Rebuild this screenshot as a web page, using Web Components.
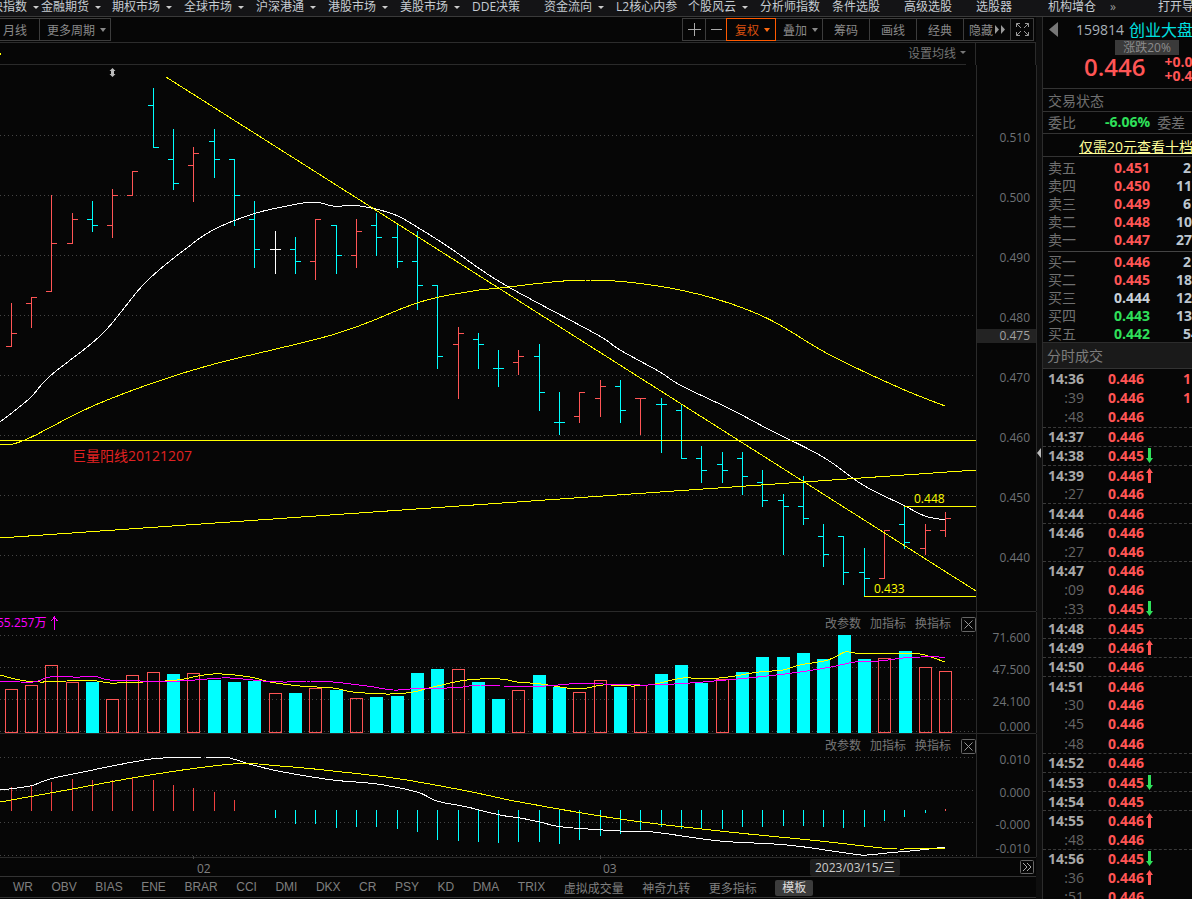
<!DOCTYPE html>
<html lang="zh">
<head>
<meta charset="utf-8">
<title>K线</title>
<style>
  html, body { margin: 0; height: 899px; overflow: hidden; background: #060606; }
  body { font: 12px "Open Sans", "Noto Sans CJK SC", sans-serif; color: #999; }
</style>
</head>
<body>
<kline-app></kline-app>

<script>
(function () {
  const CN = '"Open Sans", "Noto Sans CJK SC", sans-serif';
  const RED = '#ff5555';
  const CYAN = '#00ffff';
  const YELLOW = '#ffff00';
  const MAGENTA = '#ff00ff';
  const COLORS = { c: CYAN, r: RED, w: '#ffffff' };

  // x, high, low, open, close, colour (screen pixels read off the picture)
  const BARS = [
    [11, 303, 346, 346, 333, 'r'], [31, 297, 327, 303, 297, 'r'], [51, 195, 291, 291, 243, 'r'],
    [72, 213, 243, 243, 219, 'r'], [92, 201, 231, 219, 225, 'c'], [112, 189, 237, 225, 195, 'r'],
    [132, 171, 195, 195, 171, 'r'], [153, 88, 147, 105, 147, 'c'], [173, 129, 189, 159, 183, 'c'],
    [193, 147, 201, 165, 153, 'r'], [214, 129, 177, 141, 159, 'c'], [234, 159, 225, 159, 195, 'c'],
    [254, 201, 267, 219, 249, 'c'], [275, 231, 273, 249, 249, 'w'], [295, 237, 273, 249, 261, 'c'],
    [315, 219, 279, 261, 219, 'r'], [336, 225, 273, 225, 255, 'c'], [356, 219, 267, 255, 231, 'r'],
    [376, 213, 255, 225, 237, 'c'], [397, 225, 267, 237, 261, 'c'], [417, 231, 309, 261, 285, 'c'],
    [437, 285, 368, 285, 356, 'c'], [458, 327, 398, 344, 333, 'r'], [478, 333, 368, 339, 344, 'c'],
    [498, 350, 386, 368, 368, 'c'], [518, 350, 374, 362, 356, 'r'], [539, 344, 410, 356, 392, 'c'],
    [559, 392, 434, 422, 422, 'c'], [579, 392, 422, 416, 392, 'r'], [600, 380, 416, 398, 386, 'r'],
    [620, 380, 422, 386, 410, 'c'], [640, 398, 434, 398, 398, 'r'], [661, 398, 452, 404, 404, 'c'],
    [681, 404, 458, 410, 458, 'c'], [701, 446, 482, 458, 470, 'c'], [722, 452, 482, 464, 470, 'c'],
    [742, 452, 494, 458, 476, 'c'], [762, 470, 506, 482, 500, 'c'], [783, 494, 554, 500, 506, 'c'],
    [803, 476, 524, 506, 518, 'c'], [823, 524, 566, 536, 554, 'c'], [843, 536, 584, 536, 572, 'c'],
    [864, 548, 596, 572, 578, 'c'], [884, 530, 578, 578, 530, 'r'], [904, 506, 548, 524, 542, 'c'],
    [925, 524, 554, 548, 530, 'r'], [945, 512, 536, 530, 518, 'r']
  ];

  const MA_WHITE = [[0, 422], [30, 398], [50, 376], [102, 334], [146, 282], [192, 244], [217, 228], [250, 215], [277, 208], [313, 202], [333, 206], [360, 206], [393, 214], [417, 227], [450, 248], [500, 282], [570, 320], [603, 338], [620, 350], [660, 372], [680, 385], [730, 409], [770, 430], [823, 457], [863, 485], [903, 505], [925, 516], [945, 520]];
  const MA_YELLOW = [[0, 445], [25, 440], [100, 403], [200, 368], [335, 334], [417, 303], [467, 292], [500, 288], [590, 280], [680, 290], [760, 315], [830, 355], [900, 388], [945, 406]];

  // x, top, hollow
  const VOLS = [
    [11, 689, 1], [31, 685, 1], [51, 665, 1], [72, 682, 1], [92, 682, 0], [112, 699, 1], [132, 675, 1], [153, 672, 1],
    [173, 674, 0], [193, 673, 1], [214, 680, 0], [234, 682, 0], [254, 681, 0], [275, 693, 1], [295, 693, 0], [315, 688, 1],
    [336, 690, 0], [356, 698, 1], [376, 697, 0], [397, 696, 0], [417, 673, 0], [437, 669, 0], [458, 669, 1], [478, 682, 0],
    [498, 699, 0], [518, 690, 1], [539, 675, 0], [559, 687, 0], [579, 692, 1], [600, 680, 1], [620, 687, 0], [640, 685, 1],
    [661, 674, 0], [681, 665, 0], [701, 683, 0], [722, 679, 1], [742, 672, 0], [762, 657, 0], [783, 657, 0], [803, 653, 0],
    [823, 659, 0], [844, 635, 0], [864, 659, 0], [884, 658, 1], [905, 651, 0], [925, 667, 1], [945, 671, 1]
  ];
  const VOL_YELLOW = [[0, 675], [20, 680], [40, 682], [67, 681], [97, 681], [110, 683], [143, 682], [177, 680], [213, 674], [250, 677], [270, 682], [300, 686], [333, 688], [353, 692], [390, 694], [413, 692], [433, 687], [467, 680], [500, 679], [517, 682], [541, 684], [578, 689], [603, 685], [634, 686], [655, 684], [683, 678], [703, 679], [728, 677], [759, 672], [783, 670], [800, 665], [828, 660], [845, 652], [855, 653], [893, 653], [920, 654], [945, 662]];
  const VOL_MAGENTA = [[0, 681], [33, 682], [50, 677], [80, 677], [93, 676], [110, 680], [140, 681], [180, 681], [207, 679], [230, 678], [263, 681], [287, 682], [307, 681], [333, 682], [367, 686], [393, 690], [410, 689], [447, 688], [463, 687], [477, 685], [500, 686], [545, 686], [569, 684], [603, 684], [648, 685], [690, 683], [714, 681], [748, 678], [776, 675], [800, 672], [831, 667], [855, 662], [879, 661], [903, 658], [921, 657], [945, 657]];

  // x, end of the stick (the stick starts on the zero line)
  const MACD_RED = [[11, 787], [31, 786], [51, 782], [72, 779], [92, 780], [112, 780], [132, 778], [153, 780], [173, 785], [193, 788], [214, 792], [234, 800], [945, 809]];
  const MACD_CYAN = [[275, 818], [295, 824], [315, 824], [336, 828], [356, 827], [376, 827], [397, 829], [417, 832], [437, 840], [458, 841], [478, 842], [498, 843], [518, 842], [539, 842], [559, 844], [579, 840], [600, 836], [620, 834], [640, 830], [661, 827], [681, 829], [701, 828], [722, 829], [742, 827], [762, 827], [783, 826], [803, 826], [823, 827], [843, 828], [864, 827], [884, 821], [904, 817], [925, 813]];
  const DIF = [[0, 790], [30, 786], [50, 779], [83, 772], [133, 762], [163, 758], [220, 757], [233, 759], [253, 765], [283, 772], [333, 780], [377, 784], [417, 792], [437, 801], [467, 807], [500, 815], [520, 818], [540, 822], [563, 827], [620, 831], [653, 832], [720, 841], [787, 845], [853, 854], [867, 855], [887, 853], [920, 850], [945, 847]];
  const DEA = [[0, 802], [67, 790], [150, 775], [233, 764], [280, 766], [333, 771], [400, 779], [467, 791], [520, 802], [620, 819], [720, 831], [820, 841], [873, 847], [897, 849], [945, 848]];

  // catmull-rom through the read-off points, so the averages don't show corners
  function smooth(points) {
    const out = [];
    for (let i = 0; i < points.length - 1; i += 1) {
      const p0 = points[Math.max(i - 1, 0)];
      const p1 = points[i];
      const p2 = points[i + 1];
      const p3 = points[Math.min(i + 2, points.length - 1)];
      const steps = Math.max(1, Math.round((p2[0] - p1[0]) / 4));
      for (let s = 0; s < steps; s += 1) {
        const t = s / steps;
        const f = (a, b, c, d) => 0.5 * (2 * b + (c - a) * t + (2 * a - 5 * b + 4 * c - d) * t * t + (3 * b - a - 3 * c + d) * t * t * t);
        out.push([+f(p0[0], p1[0], p2[0], p3[0]).toFixed(1), +f(p0[1], p1[1], p2[1], p3[1]).toFixed(1)]);
      }
    }
    out.push(points[points.length - 1]);
    return out;
  }

  function polyline(points, color) {
    return `<polyline fill="none" stroke="${color}" points="${smooth(points).map((p) => p.join(',')).join(' ')}"/>`;
  }

  function seg(x1, y1, x2, y2, color) {
    return `<line x1="${x1}" y1="${y1}" x2="${x2}" y2="${y2}" stroke="${color}"/>`;
  }

  function gridLines(ys) {
    return ys.map((y) => `<line x1="0" x2="976" y1="${y + 0.5}" y2="${y + 0.5}" stroke="#444" stroke-dasharray="1 3"/>`).join('');
  }

  class NavItem extends HTMLElement {
    constructor() {
      super();
      const caret = this.hasAttribute('caret') ? '<i></i>' : '';
      this.attachShadow({ mode: 'open' }).innerHTML = `
        <style>
          :host { display: block; flex: none; width: 72px; white-space: nowrap; line-height: 13px; }
          i { display: inline-block; margin: 0 0 2px 6px; border: 3px solid transparent; border-top: 3px solid #ccc; border-bottom: 0; }
        </style>
        <slot></slot>${caret}`;
    }
  }

  class TopNav extends HTMLElement {
    constructor() {
      super();
      this.attachShadow({ mode: 'open' }).innerHTML = `
        <style>
          :host { display: flex; height: 16px; box-sizing: content-box; border-bottom: 1px solid #3a3a3a; background: #141416;
            color: #c6ccd2; overflow: hidden; font-family: ${CN}; }
        </style>
        <slot></slot>`;
    }
  }

  class ToolBtn extends HTMLElement {
    constructor() {
      super();
      const caret = this.hasAttribute('caret') ? '<i></i>' : '';
      this.attachShadow({ mode: 'open' }).innerHTML = `
        <style>
          :host { display: flex; align-items: center; justify-content: center; box-sizing: border-box; height: 23px; flex: none;
            margin-left: -1px; border: 1px solid #3c3c3c; color: #8a8a8a; white-space: nowrap; }
          :host([caret]) { padding-left: 3px; }
          :host([active]) { border-color: #ff5a00; color: #d9500f; position: relative; }
          i { margin-left: 5px; border: 3px solid transparent; border-top: 4px solid #888; border-bottom: 0; }
          :host([active]) i { border-top-color: #ff6a10; }
        </style>
        <slot></slot>${caret}`;
    }
  }

  class ToolBar extends HTMLElement {
    constructor() {
      super();
      this.attachShadow({ mode: 'open' }).innerHTML = `
        <style>
          :host { display: flex; align-items: center; border-bottom: 1px solid #2c2c2c; box-sizing: content-box; height: 25px; }
          .right { display: flex; margin-left: auto; margin-right: 2px; }
          svg { display: block; }
        </style>
        <tool-btn style="width:50px;margin-left:-10px">月线</tool-btn>
        <tool-btn style="width:72px" caret>更多周期</tool-btn>
        <div class="right">
          <tool-btn style="width:24px"><svg width="13" height="13"><path d="M0 6.5H13M6.5 0V13" stroke="#aaa"/></svg></tool-btn>
          <tool-btn style="width:22px"><svg width="11" height="13"><path d="M0 6.5H11" stroke="#aaa"/></svg></tool-btn>
          <tool-btn style="width:50px" active caret>复权</tool-btn>
          <tool-btn style="width:48px" caret>叠加</tool-btn>
          <tool-btn style="width:48px">筹码</tool-btn>
          <tool-btn style="width:48px">画线</tool-btn>
          <tool-btn style="width:48px">经典</tool-btn>
          <tool-btn style="width:48px">隐藏<svg width="10" height="9" style="margin-left:2px"><path d="M0 0L4 4.5L0 9ZM6 0L10 4.5L6 9Z" fill="#999"/></svg></tool-btn>
          <tool-btn style="width:24px"><svg width="13" height="13" fill="none" stroke="#999"><path d="M0.5 4V0.5H4M0.5 0.5L5 5M9 0.5H12.5V4M12.5 0.5L8 5M0.5 9V12.5H4M0.5 12.5L5 8M9 12.5H12.5V9M12.5 12.5L8 8"/></svg></tool-btn>
        </div>`;
    }
  }

  class MaHeader extends HTMLElement {
    constructor() {
      super();
      this.attachShadow({ mode: 'open' }).innerHTML = `
        <style>
          :host { display: flex; height: 22px; }
          .left { width: 967px; box-sizing: border-box; border-bottom: 1px solid #2a2a2a; color: #747474; display: flex; align-items: center;
            justify-content: flex-end; padding-bottom: 2px; position: relative; }
          .left b { position: absolute; left: 0; top: 10px; width: 1px; height: 2px; background: ${YELLOW}; }
          i { margin: 0 0 0 4px; border: 3px solid transparent; border-top: 3px solid #777; border-bottom: 0; }
          .gap { width: 9px; }
          .axis { width: 59px; border-left: 1px solid #2a2a2a; border-right: 1px solid #2a2a2a; box-sizing: content-box; }
        </style>
        <div class="left"><b></b>设置均线<i></i></div><div class="gap"></div><div class="axis"></div>`;
    }
  }

  // one band of the chart: canvas on the left, price scale on the right
  class ChartPane extends HTMLElement {
    constructor() {
      super();
      this.attachShadow({ mode: 'open' });
    }

    // what the pane draws, in screen pixels
    draw() {
      return '';
    }

    axis() {
      return [];
    }

    connectedCallback() {
      const top = +this.getAttribute('top');
      const height = +this.getAttribute('height');
      const labels = this.axis().map(([y, text, boxed]) => (
        `<span class="${boxed ? 'box' : ''}" style="top:${y - top - 8}px">${text}</span>`
      )).join('');
      this.shadowRoot.innerHTML = `
        <style>
          :host { display: flex; position: relative; height: ${height}px; border-bottom: 1px solid #2a2a2a; }
          svg { display: block; width: 976px; height: ${height}px; flex: none; font-family: ${CN}; font-size: 12px; }
          .axis { position: relative; width: 59px; flex: none; border-left: 1px solid #2a2a2a; border-right: 1px solid #2a2a2a; color: #6e7276; }
          .axis span { position: absolute; right: 6px; line-height: 16px; }
          .axis span.box { left: 0; right: 0; text-align: right; padding-right: 6px; line-height: 14px; margin-top: 1px; background: #232323; color: #a0a0a0; }
        </style>
        <svg viewBox="0 ${top} 976 ${height}" shape-rendering="crispEdges">${this.draw()}</svg>
        <div class="axis">${labels}</div>
        <slot></slot>`;
    }
  }

  class PricePane extends ChartPane {
    draw() {
      let out = gridLines([135, 195, 255, 315, 375, 435, 495, 555]);
      BARS.forEach(([x, hi, lo, open, close, c]) => {
        const color = COLORS[c];
        const px = x + 0.5;
        out += seg(px, hi, px, lo + 1, color);
        out += seg(x - 5, open + 0.5, x, open + 0.5, color);
        out += seg(x, close + 0.5, x + 6, close + 0.5, color);
      });
      out += polyline(MA_WHITE, '#ffffff') + polyline(MA_YELLOW, YELLOW);
      out += seg(166, 77, 976, 591, YELLOW);
      out += seg(0, 538, 976, 470, YELLOW);
      out += seg(0, 440.5, 976, 440.5, YELLOW);
      out += seg(904, 506.5, 976, 506.5, YELLOW);
      out += seg(864, 596.5, 976, 596.5, YELLOW);
      out += `<text x="914" y="503" fill="${YELLOW}">0.448</text>`;
      out += `<text x="874" y="593" fill="${YELLOW}">0.433</text>`;
      out += '<text x="72" y="461" fill="#e02222" font-size="14">巨量阳线20121207</text>';
      out += '<path d="M112.5 68L115.5 71H114V74H115.5L112.5 77L109.5 74H111V71H109.5Z" fill="#bbb" shape-rendering="auto"/>';
      return out;
    }

    axis() {
      return [[138, '0.510'], [198, '0.500'], [258, '0.490'], [318, '0.480'], [336, '0.475', true], [378, '0.470'],
        [438, '0.460'], [498, '0.450'], [558, '0.440']];
    }
  }

  class VolumePane extends ChartPane {
    draw() {
      let out = gridLines([635, 667, 699, 731]);
      VOLS.forEach(([x, top, hollow]) => {
        if (hollow) {
          out += `<rect x="${x - 5.5}" y="${top + 0.5}" width="12" height="${732 - top}" fill="none" stroke="${RED}"/>`;
        } else {
          out += `<rect x="${x - 6}" y="${top}" width="13" height="${733 - top}" fill="${CYAN}"/>`;
        }
      });
      out += polyline(VOL_YELLOW, YELLOW) + polyline(VOL_MAGENTA, MAGENTA);
      out += `<text x="-3" y="627" fill="${MAGENTA}">55.257万</text>`;
      out += `<path d="M54.5 617V630M51.5 621L54.5 617L57.5 621" fill="none" stroke="${MAGENTA}"/>`;
      return out;
    }

    axis() {
      return [[638, '71.600'], [670, '47.500'], [702, '24.100'], [727, '0.000']];
    }
  }

  class MacdPane extends ChartPane {
    draw() {
      let out = gridLines([757, 790, 822, 855]);
      MACD_RED.forEach(([x, y]) => { out += seg(x + 0.5, y, x + 0.5, 811, x === 945 ? RED : '#f04040'); });
      MACD_CYAN.forEach(([x, y]) => { out += seg(x + 0.5, 810, x + 0.5, y, CYAN); });
      out += polyline(DIF, '#ffffff') + polyline(DEA, YELLOW);
      return out;
    }

    axis() {
      return [[760, '0.010'], [793, '0.000'], [825, '-0.000'], [849, '-0.010']];
    }
  }

  class PaneTools extends HTMLElement {
    constructor() {
      super();
      this.attachShadow({ mode: 'open' }).innerHTML = `
        <style>
          :host { position: absolute; right: 60px; top: 5px; display: flex; gap: 9px; align-items: flex-start; color: #767676; white-space: nowrap; }
          span { line-height: 13px; }
          svg { display: block; margin-left: 1px; }
        </style>
        <span>改参数</span><span>加指标</span><span>换指标</span>
        <svg width="15" height="15" fill="none" stroke="#666"><rect x="0.5" y="0.5" width="14" height="14" rx="1"/><path d="M3.5 3.5L11.5 11.5M11.5 3.5L3.5 11.5" stroke="#999"/></svg>`;
    }
  }

  class TimeAxis extends HTMLElement {
    constructor() {
      super();
      this.attachShadow({ mode: 'open' }).innerHTML = `
        <style>
          :host { display: block; position: relative; height: 18px; border-bottom: 1px solid #333; color: #808080; }
          span, b, svg { position: absolute; }
          b { top: -2px; width: 1px; height: 3px; background: #444; }
          span { top: 3px; line-height: 16px; }
          .date { left: 810px; top: 1px; width: 90px; height: 17px; line-height: 17px; text-align: center; background: #1e1e1e; color: #ccc; border-radius: 2px; }
          svg { left: 1020px; top: 2px; }
        </style>
        <b style="left:193px"></b><span style="left:197px">02</span>
        <b style="left:600px"></b><span style="left:603px">03</span>
        <span class="date">2023/03/15/三</span>
        <svg width="14" height="14" fill="none" stroke="#aaa"><rect x="0.5" y="0.5" width="13" height="13" rx="1" stroke="#666"/><path d="M3 3L7 7L3 11M7 3L11 7L7 11"/></svg>`;
    }
  }

  class IndexTabs extends HTMLElement {
    constructor() {
      super();
      const names = ['WR', 'OBV', 'BIAS', 'ENE', 'BRAR', 'CCI', 'DMI', 'DKX', 'CR', 'PSY', 'KD', 'DMA', 'TRIX', '虚拟成交量', '神奇九转', '更多指标'];
      this.attachShadow({ mode: 'open' }).innerHTML = `
        <style>
          :host { display: flex; align-items: center; gap: 18.5px; height: 20px; padding-left: 13px; border-bottom: 1px solid #333;
            color: #808080; font-family: "Liberation Sans", "Noto Sans CJK SC", sans-serif; white-space: nowrap; }
          .tpl { padding: 0 7px; margin-top: 1px; line-height: 16px; background: #3c3c3c; color: #ddd; border-radius: 2px; font-size: 12px; }
        </style>
        ${names.map((n) => `<span>${n}</span>`).join('')}<span class="tpl">模板</span>`;
    }
  }

  class OrderRow extends HTMLElement {
    connectedCallback() {
      const color = this.getAttribute('color') || RED;
      const vol = this.getAttribute('vol');
      this.attachShadow({ mode: 'open' }).innerHTML = `
        <style>
          :host { display: flex; height: 18px; align-items: center; padding-left: 5px; white-space: nowrap; overflow: hidden; font-size: 14px; }
          span { flex: none; }
          .l { width: 66px; color: #707070; }
          .p { width: 62px; color: ${color}; font-weight: 700; }
          .v { color: #bcc6d0; font-weight: 700; ${vol.length === 1 || vol === '54' ? 'margin-left: 7px;' : ''} }
        </style>
        <span class="l">${this.getAttribute('label')}</span><span class="p">${this.getAttribute('price')}</span><span class="v">${vol}</span>`;
    }
  }

  class TickRow extends HTMLElement {
    connectedCallback() {
      const time = this.getAttribute('time');
      const dir = this.getAttribute('dir');
      const sub = time.startsWith(':');
      let arrow = '';
      if (dir === 'down') {
        arrow = '<svg width="7" height="15"><path d="M2 0H5V10H7L3.5 15L0 10H2Z" fill="#2fe05a"/></svg>';
      } else if (dir === 'up') {
        arrow = `<svg width="7" height="15"><path d="M2 15H5V5H7L3.5 0L0 5H2Z" fill="${RED}"/></svg>`;
      }
      this.attachShadow({ mode: 'open' }).innerHTML = `
        <style>
          :host { display: flex; align-items: center; height: 19.2px; box-sizing: border-box; padding-left: 5px; white-space: nowrap;
            font-size: 14px; font-weight: 700; overflow: hidden; }
          :host([sep]) { border-top: 1px dashed #3a3a3a; }
          span { flex: none; }
          .t { width: 36px; text-align: right; color: ${sub ? '#666' : '#a8a8a8'}; font-weight: ${sub ? 400 : 700}; }
          .p { margin-left: 24px; width: 38px; color: ${RED}; }
          svg { display: block; flex: none; }
          .a { width: 37px; }
          .v { color: ${RED}; }
        </style>
        <span class="t">${time}</span><span class="p">${this.getAttribute('price')}</span>
        <span class="a">${arrow}</span><span class="v">${this.getAttribute('vol') || ''}</span>`;
    }
  }

  class QuotePanel extends HTMLElement {
    constructor() {
      super();
      const sells = [['卖五', '0.451', '2'], ['卖四', '0.450', '117'], ['卖三', '0.449', '6'], ['卖二', '0.448', '10'], ['卖一', '0.447', '27']];
      const buys = [['买一', '0.446', '2', RED], ['买二', '0.445', '18', RED], ['买三', '0.444', '124', '#c8d0d8'], ['买四', '0.443', '13', '#2fe05a'], ['买五', '0.442', '54', '#2fe05a']];
      const row = ([label, price, vol, color]) => `<order-row label="${label}" price="${price}" vol="${vol}" color="${color || RED}"></order-row>`;
      // time, price, dir, vol; a dashed line starts each new minute
      const ticks = [
        ['14:36', '0.446', '', '1'], [':39', '0.446', '', '1'], [':48', '0.446'], ['14:37', '0.446'], ['14:38', '0.445', 'down'],
        ['14:39', '0.446', 'up'], [':27', '0.446'], ['14:44', '0.446'], ['14:46', '0.446'], [':27', '0.446'], ['14:47', '0.446'],
        [':09', '0.446'], [':33', '0.445', 'down'], ['14:48', '0.445'], ['14:49', '0.446', 'up'], ['14:50', '0.446'], ['14:51', '0.446'],
        [':30', '0.446'], [':45', '0.446'], [':48', '0.446'], ['14:52', '0.446'], ['14:53', '0.445', 'down'], ['14:54', '0.445'],
        ['14:55', '0.446', 'up'], [':48', '0.446'], ['14:56', '0.445', 'down'], [':36', '0.446', 'up'], [':51', '0.446']
      ];
      const tickHtml = ticks.map(([t, p, d, v], i) => (
        `<tick-row time="${t}" price="${p}" dir="${d || ''}" vol="${v || ''}" ${i > 0 && !t.startsWith(':') ? 'sep' : ''}></tick-row>`
      )).join('');
      this.attachShadow({ mode: 'open' }).innerHTML = `
        <style>
          :host { display: flex; flex-direction: column; width: 150px; flex: none; box-sizing: border-box; border-left: 1px solid #2c2c2c;
            overflow: hidden; white-space: nowrap; font-family: ${CN}; }
          .head { height: 71px; border-bottom: 1px solid #333; flex: none; }
          .r1 { display: flex; align-items: center; height: 24px; }
          .r1 svg { margin-left: 6px; flex: none; }
          .code { margin-left: 18px; font-size: 14px; color: #a8b0b8; }
          .name { margin-left: 5px; font-size: 16px; color: #00e0e0; }
          .badge { margin: -1px 0 0 72px; width: 64px; height: 15px; line-height: 15px; text-align: center; background: #3a3a3a; color: #8c8c8c; }
          .r3 { display: flex; margin-left: 41px; }
          .big { font-size: 24px; line-height: 24px; font-weight: 600; color: ${RED}; }
          .chg { margin-left: 19px; font-size: 14px; font-weight: 700; line-height: 14px; color: ${RED}; }
          .state { height: 22px; line-height: 24px; padding-left: 5px; border-bottom: 1px solid #333; color: #707070; flex: none; font-size: 14px; }
          .ratio { display: flex; align-items: center; height: 21px; padding: 0 0 2px 5px; box-sizing: border-box; height: 22px; border-bottom: 1px solid #333; flex: none; color: #707070; font-size: 14px; }
          .ratio b { margin-left: 29px; color: #2fe05a; }
          .ratio span:last-child { margin-left: 7px; }
          .promo { height: 22px; line-height: 26px; padding-left: 36px; border-bottom: 1px solid #333; flex: none; color: #ffff99; font-size: 14px; text-decoration: underline; }
          .book { padding-top: 1px; flex: none; }
          .rule { height: 1px; margin: 3px 0 0 5px; background: #444; }
          .title { flex: none; height: 25px; line-height: 25px; padding-left: 4px; background: #1a1a1a; color: #7c7c7c; font-size: 14px;
            border-top: 1px solid #2c2c2c; border-bottom: 1px solid #333; }
        </style>
        <div class="head">
          <div class="r1">
            <svg width="9" height="15"><path d="M9 0V15L0 7.5Z" fill="#777"/></svg>
            <span class="code">159814</span><span class="name">创业大盘</span>
          </div>
          <div class="badge">涨跌20%</div>
          <div class="r3"><span class="big">0.446</span><span class="chg">+0.0<br>+0.4</span></div>
        </div>
        <div class="state">交易状态</div>
        <div class="ratio"><span>委比</span><b>-6.06%</b><span>委差</span></div>
        <div class="promo">仅需20元查看十档</div>
        <div class="book">${sells.map(row).join('')}<div class="rule"></div>${buys.map(row).join('')}</div>
        <div class="title">分时成交</div>
        <div>${tickHtml}</div>`;
    }
  }

  class KlineApp extends HTMLElement {
    constructor() {
      super();
      const nav = [['期权市场', 1], ['全球市场', 1], ['沪深港通', 1], ['港股市场', 1], ['美股市场', 1], ['DDE决策', 0], ['资金流向', 1], ['L2核心内参', 0],
        ['个股风云', 1], ['分析师指数', 0], ['条件选股', 0], ['高级选股', 0], ['选股器', 0], ['机构增仓', 0]];
      const navHtml = nav.map(([t, c]) => `<nav-item ${c ? 'caret' : ''}>${t}</nav-item>`).join('');
      this.attachShadow({ mode: 'open' }).innerHTML = `
        <style>
          :host { display: flex; flex-direction: column; width: 1192px; height: 899px; overflow: hidden; }
          .main { display: flex; flex: 1; min-height: 0; }
          .left { width: 1036px; flex: none; }
          .gutter { width: 6px; flex: none; background: #0e0e0e; display: flex; align-items: center; padding-bottom: 10px; box-sizing: border-box; }
          .gutter svg { display: block; margin: 0 0 0 1px; }
        </style>
        <top-nav>
          <nav-item caret style="width:62px;margin-left:-21px">板块指数</nav-item>
          <nav-item caret style="width:71px">金融期货</nav-item>
          ${navHtml}
          <nav-item style="width:48px;color:#999;margin-left:-10px">»</nav-item>
          <nav-item>打开导航</nav-item>
        </top-nav>
        <div class="main">
          <div class="left">
            <tool-bar></tool-bar>
            <ma-header></ma-header>
            <price-pane top="65" height="546"></price-pane>
            <volume-pane top="612" height="121"><pane-tools></pane-tools></volume-pane>
            <macd-pane top="734" height="123"><pane-tools></pane-tools></macd-pane>
            <time-axis></time-axis>
            <index-tabs></index-tabs>
          </div>
          <div class="gutter"><svg width="4" height="18"><path d="M0 9L4 4V14Z" fill="#bbb"/></svg></div>
          <quote-panel></quote-panel>
        </div>`;
    }
  }

  customElements.define('nav-item', NavItem);
  customElements.define('top-nav', TopNav);
  customElements.define('tool-btn', ToolBtn);
  customElements.define('tool-bar', ToolBar);
  customElements.define('ma-header', MaHeader);
  customElements.define('price-pane', PricePane);
  customElements.define('volume-pane', VolumePane);
  customElements.define('macd-pane', MacdPane);
  customElements.define('pane-tools', PaneTools);
  customElements.define('time-axis', TimeAxis);
  customElements.define('index-tabs', IndexTabs);
  customElements.define('order-row', OrderRow);
  customElements.define('tick-row', TickRow);
  customElements.define('quote-panel', QuotePanel);
  customElements.define('kline-app', KlineApp);
}());
</script>
</body>
</html>
